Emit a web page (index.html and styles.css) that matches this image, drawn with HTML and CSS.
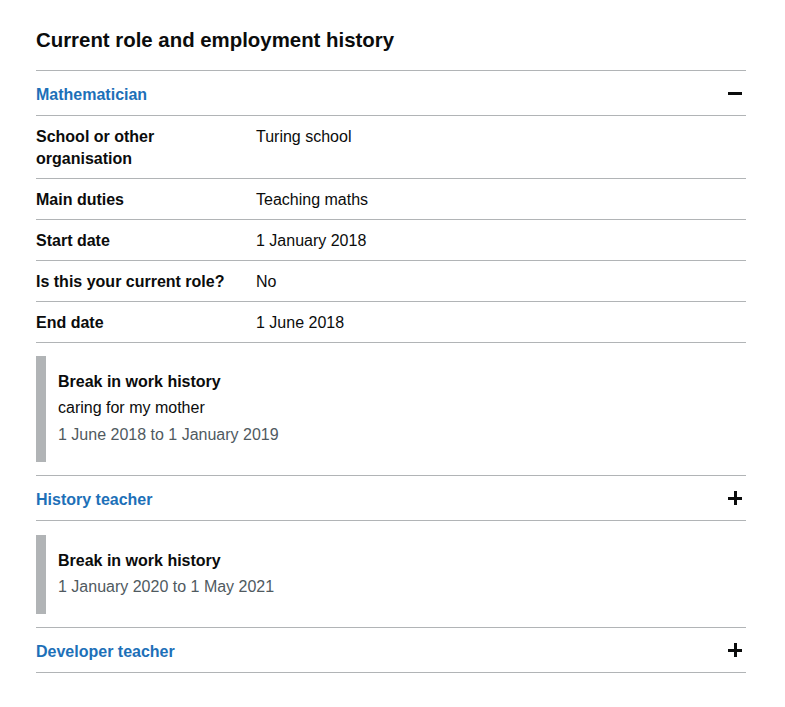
FILE: index.html
```html
<!DOCTYPE html>
<html lang="en">
<head>
<meta charset="utf-8">
<title>Current role and employment history</title>
<link rel="stylesheet" href="styles.css">
</head>
<body>
<main class="page">
  <h2 class="title">Current role and employment history</h2>
  <div class="accordion">
    <section class="section">
      <div class="section-header">
        <span class="section-title">Mathematician</span>
        <span class="icon icon-minus" aria-hidden="true"></span>
      </div>
      <dl class="summary">
        <div class="row"><dt class="key">School or other organisation</dt><dd class="value">Turing school</dd></div>
        <div class="row"><dt class="key">Main duties</dt><dd class="value">Teaching maths</dd></div>
        <div class="row"><dt class="key">Start date</dt><dd class="value">1 January 2018</dd></div>
        <div class="row"><dt class="key">Is this your current role?</dt><dd class="value">No</dd></div>
        <div class="row"><dt class="key">End date</dt><dd class="value">1 June 2018</dd></div>
      </dl>
      <div class="inset">
        <p class="inset-heading">Break in work history</p>
        <p class="inset-text">caring for my mother</p>
        <p class="inset-date">1 June 2018 to 1 January 2019</p>
      </div>
    </section>
    <section class="section">
      <div class="section-header">
        <span class="section-title">History teacher</span>
        <span class="icon icon-plus" aria-hidden="true"></span>
      </div>
      <div class="inset">
        <p class="inset-heading">Break in work history</p>
        <p class="inset-date">1 January 2020 to 1 May 2021</p>
      </div>
    </section>
    <section class="section">
      <div class="section-header">
        <span class="section-title">Developer teacher</span>
        <span class="icon icon-plus" aria-hidden="true"></span>
      </div>
    </section>
  </div>
</main>
</body>
</html>
```
FILE: styles.css
```css
* { box-sizing: border-box; }
html, body { margin: 0; padding: 0; background: #ffffff; }
body {
  font-family: "Liberation Sans", Arial, sans-serif;
  color: #0b0c0c;
  font-size: 16px;
  line-height: 22px;
}
.page {
  width: 710px;
  margin-left: 36px;
  padding-top: 27px;
}
.title {
  margin: 0 0 17px;
  font-size: 20.4px;
  line-height: 26px;
  font-weight: 700;
}
.section-header {
  display: flex;
  justify-content: space-between;
  align-items: center;
  border-top: 1px solid #b1b4b6;
  border-bottom: 1px solid #b1b4b6;
  padding: 13px 4px 9px 0;
}
.section + .section .section-header { margin-top: 13px; }
.section-title {
  color: #1d70b8;
  font-weight: 700;
}
.icon { position: relative; width: 14px; height: 14px; display: block; top: -2px; }
.icon::before, .icon::after {
  content: "";
  position: absolute;
  background: #0b0c0c;
}
.icon::before { left: 0; top: 5.5px; width: 14px; height: 3px; }
.icon-plus::after { left: 5.5px; top: 0; width: 3px; height: 14px; }
.summary { margin: 0; }
.row {
  display: grid;
  grid-template-columns: 220px 1fr;
  border-bottom: 1px solid #b1b4b6;
  padding: 10px 0 8px;
}
.key { font-weight: 700; padding-right: 20px; margin: 0; }
.value { margin: 0; }
.inset {
  margin-top: 13px;
  border-left: 10px solid #b1b4b6;
  padding: 15px 12px 16px 12px;
}
.section-header + .inset { margin-top: 14px; }
.inset p { margin: 0; }
.inset-heading { font-weight: 700; margin-bottom: 4px !important; }
.inset-text { margin-bottom: 5px !important; }
.inset-date { color: #505a5f; }
```
